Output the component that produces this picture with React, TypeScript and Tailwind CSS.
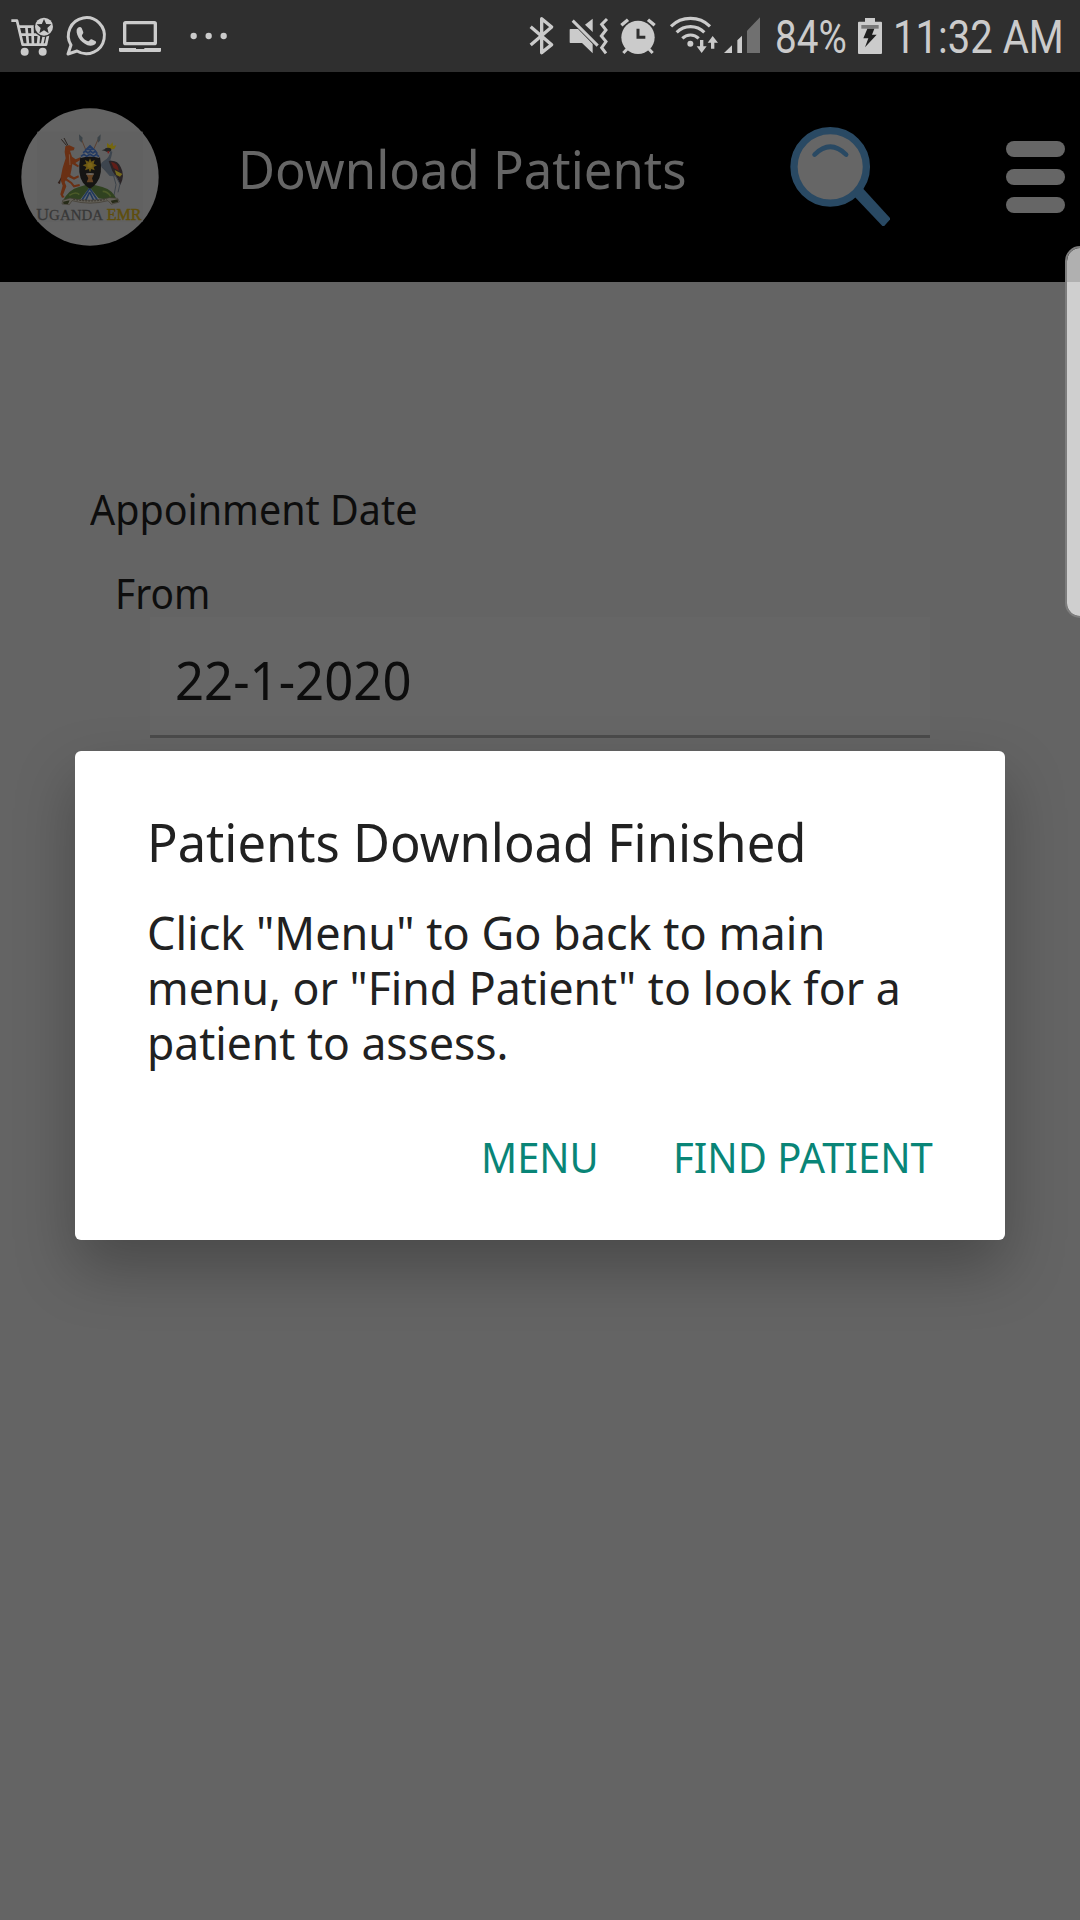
import React from "react";

const INK = "#cbcbcb";
const BAR = "#2f2f2f";

function CartIcon() {
  return (
    <svg viewBox="0 0 180 216" className="h-[72px] w-[60px] shrink-0" fill="none" stroke={INK}>
      <path d="M34 62H51L68 134H138L144 106" strokeWidth="8" strokeLinejoin="round" />
      <path d="M56 80H104M61 104H120M79 80L84 134M97 80L99 134M117 104L114 134M132 106L126 134" strokeWidth="8" />
      <circle cx="74" cy="155" r="12" fill={INK} stroke="none" />
      <circle cx="128" cy="155" r="12" fill={INK} stroke="none" />
      <circle cx="132" cy="80" r="31" fill={BAR} stroke="none" />
      <circle cx="132" cy="80" r="27" fill={INK} stroke="none" />
      <path d="M132 57L138.500 72L154 73L142 84L146 100L132 91L118 100L122 84L110 73L125.500 72Z" fill={BAR} stroke="none" />
    </svg>
  );
}

function WhatsAppIcon() {
  return (
    <svg viewBox="180 0 156 216" className="h-[72px] w-[52px] shrink-0" fill="none">
      <path d="M204 162L213 135A54 54 0 1 1 231 153Z" stroke={INK} strokeWidth="9" strokeLinejoin="round" />
      <path d="M230 89C232 82 241 77 245 84L250 97C251 101 244 105 246 109C250 117 257 122 264 124C268 125 270 117 275 118L287 124C292 130 281 138 271 137C248 135 227 108 230 89Z" fill={INK} />
    </svg>
  );
}

function LaptopIcon() {
  return (
    <svg viewBox="336 0 174 216" className="h-[72px] w-[58px] shrink-0" fill="none">
      <rect x="374" y="68" width="92" height="63" rx="3" stroke={INK} strokeWidth="10" />
      <path d="M357 144H408V147H433V144H483V152Q483 156 479 156H361Q357 156 357 152Z" fill={INK} />
    </svg>
  );
}

function MoreIcon() {
  return (
    <svg viewBox="510 0 270 216" className="h-[72px] w-[90px] shrink-0" fill={INK}>
      <circle cx="581" cy="108" r="9.500" />
      <circle cx="626" cy="108" r="9.500" />
      <circle cx="671" cy="108" r="9.500" />
    </svg>
  );
}

function BluetoothIcon() {
  return (
    <svg viewBox="0 0 150 216" className="h-[72px] w-[50px] shrink-0" fill="none" stroke={INK} strokeWidth="10">
      <path d="M62 80L125 134L95 158V56L125 81L62 135" strokeLinejoin="round" />
    </svg>
  );
}

function MuteVibrateIcon() {
  return (
    <svg viewBox="150 0 165 216" className="h-[72px] w-[55px] shrink-0" fill={INK}>
      <path d="M181 87H204L248 132V160L216 129H181Q179 129 179 127V89Q179 87 181 87Z" />
      <path d="M248 56V96L225 74Z" />
      <path d="M188 62L263 137" stroke={INK} strokeWidth="9" />
      <path d="M291 57L275 73L288 90L274 108L288 125L275 143L288 160" fill="none" stroke={INK} strokeWidth="9" />
    </svg>
  );
}

function AlarmIcon() {
  return (
    <svg viewBox="315 0 150 216" className="h-[72px] w-[50px] shrink-0" fill="none" stroke={INK}>
      <circle cx="384" cy="112" r="50" fill={INK} stroke="none" />
      <path d="M334 76L354 59M414 59L434 76" strokeWidth="10" />
      <path d="M352 146L340 159M416 146L428 159" strokeWidth="9" />
      <path d="M384 86V112H406" stroke={BAR} strokeWidth="9" />
    </svg>
  );
}

function WifiIcon() {
  return (
    <svg viewBox="465 0 168 216" className="h-[72px] w-[56px] shrink-0" fill="none" stroke={INK} strokeWidth="9.500">
      <path d="M483 79A84 84 0 0 1 600 79M500 97A59 59 0 0 1 583 97M517 115A35 35 0 0 1 566 115" />
      <circle cx="541" cy="131" r="9" fill={INK} stroke="none" />
      <path d="M575 120V146M608 146V120" strokeWidth="10" />
      <path d="M560 139L575 159L590 139ZM593 128L608 108L624 128Z" fill={INK} stroke="none" />
    </svg>
  );
}

function SignalIcon() {
  return (
    <svg viewBox="633 0 132 216" className="h-[72px] w-[44px] shrink-0" fill={INK}>
      <path d="M642 159L666 136V159Z" />
      <path d="M682 121L696 107V159H682Z" />
      <path d="M711 92L750 52V159H711Z" fill="#707070" />
    </svg>
  );
}

function BatteryIcon() {
  return (
    <svg viewBox="324 0 72 216" className="h-[72px] w-[24px] shrink-0">
      <path d="M345 54H375V65H393Q396 65 396 68V159Q396 162 393 162H327Q324 162 324 159V68Q324 65 327 65H345Z" fill={INK} />
      <rect x="334" y="75" width="52" height="11" fill="#797979" />
      <path d="M352 86H373L366 104H380L345 142L355 115H340Z" fill="#202020" />
    </svg>
  );
}

function StatusBar() {
  return (
    <div className="flex h-[72px] w-full overflow-hidden bg-[#2f2f2f] font-[Roboto,sans-serif] text-[45.500px] leading-[75px] text-[#cbcbcb]">
      <CartIcon />
      <WhatsAppIcon />
      <LaptopIcon />
      <MoreIcon />
      <div className="w-[250px] shrink-0" />
      <BluetoothIcon />
      <MuteVibrateIcon />
      <AlarmIcon />
      <WifiIcon />
      <SignalIcon />
      <div className="ml-[10px] w-[83px] shrink-0 origin-left scale-x-[0.850] whitespace-nowrap">84%</div>
      <BatteryIcon />
      <div className="ml-[11px] w-[180px] shrink-0 origin-left scale-x-[0.880] whitespace-nowrap">11:32 AM</div>
    </div>
  );
}

function Emblem() {
  return (
    <svg viewBox="0 0 480 480" className="ml-[10px] mt-[23px] h-[160px] w-[160px] shrink-0">
      <circle cx="240" cy="246" r="206" fill="#636363" />
      <rect x="82" y="110" width="316" height="270" fill="#616161" />
      {/* spears */}
      <path d="M211 125L244 205M268 125L232 205" stroke="#593f30" strokeWidth="3" />
      <path d="M207 118L218 128L215 143L208 136ZM272 118L262 128L264 143L271 136Z" fill="#3b4348" />
      {/* antelope */}
      <path d="M170 152L154 133M174 152L162 129" stroke="#2b2420" strokeWidth="3" fill="none" />
      <path d="M166 154L178 151L194 158L191 166L180 167L186 185L197 193L211 187L212 194L196 204L207 212L204 217L187 207L184 226L181 240L192 247L205 241L207 247L192 254L174 245L164 261L169 274L159 300L164 307L156 308L151 298L158 272L151 253L158 218L167 190L164 171Z" fill="#6a3014" />
      <path d="M173 170L177 190L170 225M164 250L184 264L192 274L209 270" stroke="#6a3014" strokeWidth="6" fill="none" />
      <path d="M154 247L143 264L150 267Z" fill="#32201a" />
      <path d="M178 178L180 210" stroke="#7a5540" strokeWidth="3" />
      {/* crane */}
      <path d="M291 157L291 144L300 151L308 142L309 153L319 151L313 162L301 163Z" fill="#75670f" />
      <ellipse cx="294" cy="164" rx="10" ry="6" fill="#252525" />
      <path d="M285 168L275 166L286 162Z" fill="#292929" />
      <path d="M295 168V175" stroke="#78201e" strokeWidth="5" />
      <path d="M301 167Q300 187 281 198Q268 207 275 216L299 243L315 244L319 213L301 195Q305 183 307 170Z" fill="#3d454e" />
      <path d="M296 198Q322 193 332 216Q346 241 331 270L323 252L307 228Z" fill="#292325" />
      <path d="M303 201Q324 203 327 228L311 219Z" fill="#601d17" />
      <path d="M314 225L337 237L330 245L319 240Z" fill="#75691b" />
      <path d="M310 239L318 269L312 301M315 240L330 267L324 292M275 216L294 230L310 238" stroke="#3d444b" strokeWidth="3" fill="none" />
      {/* mound */}
      <path d="M157 320Q176 283 207 276L239 266L277 276Q311 284 323 321L299 315Q240 302 183 318Z" fill="#304220" />
      <path d="M178 301Q198 288 208 299M278 289Q293 289 302 304" stroke="#4b5a28" strokeWidth="5" fill="none" />
      <path d="M239 277L207 319H273Z" fill="#66696d" />
      <path d="M239 280L216 315M239 280L262 315M239 291L227 316M239 291L251 316" stroke="#20395c" strokeWidth="5" />
      {/* shield */}
      <path d="M211 187Q240 178 270 187Q280 239 260 263Q251 276 240 281Q229 276 219 263Q201 239 211 187Z" fill="#151413" />
      <path d="M211 189Q217 175 227 166L240 153L254 166Q264 176 269 189Q240 181 211 189Z" fill="#66696d" />
      <path d="M229 163L240 153L251 163ZM219 173L227 168L234 174L241 168L249 174L256 168L262 176M213 184L222 178L230 184L240 178L251 184L259 178L267 185" stroke="#233a62" strokeWidth="5" fill="#233a62" fillOpacity="0.250" />
      <path d="M240 190L244 200L254 195L251 206L261 211L251 216L254 226L244 222L240 232L236 222L225 226L229 216L218 211L229 206L225 195L236 200Z" fill="#6c5814" />
      <circle cx="240" cy="211" r="8" fill="#7b6517" />
      <path d="M228 236H252L246 250L250 262H230L235 250Z" fill="#634223" />
      <ellipse cx="240" cy="237" rx="12" ry="3" fill="#6a635c" />
      {/* scroll */}
      <path d="M158 316L180 309Q240 323 299 308L323 310L328 321L304 328L294 317Q240 332 186 317L178 329L156 327Z" fill="#625f57" stroke="#403b32" strokeWidth="2" />
      <path d="M190 313Q240 323 290 313" stroke="#38342d" strokeWidth="3" strokeDasharray="5 4" fill="none" />
      <path d="M159 320L179 316L174 327H161ZM302 317L323 313L324 321L307 325Z" fill="#272b18" />
      <g fontFamily="Liberation Serif, serif" fontSize="51">
        <text x="79" y="375" fill="#383838" stroke="#383838" strokeWidth="0.800" textLength="200" lengthAdjust="spacingAndGlyphs">
          U<tspan fontSize="43">GANDA</tspan>
        </text>
        <text x="290" y="375" fill="#5f4e0c" stroke="#5f4e0c" strokeWidth="1.500" textLength="104" lengthAdjust="spacingAndGlyphs">EMR</text>
      </g>
    </svg>
  );
}

function SearchIcon() {
  return (
    <svg viewBox="0 0 310 310" className="h-[103px] w-[103px] shrink-0">
      <path d="M200 218L226 194L312 288L290 313Z" fill="#294963" />
      <circle cx="130" cy="132" r="109" fill="#666" stroke="#294963" strokeWidth="22" />
      <path d="M83 95Q130 48 178 95" fill="none" stroke="#294963" strokeWidth="14" strokeLinecap="round" />
    </svg>
  );
}

function Header() {
  return (
    <header className="flex h-[210px] w-full items-start bg-black">
      <Emblem />
      <h1 className="ml-[68px] mt-[67px] w-[480px] origin-left scale-x-[0.959] whitespace-nowrap text-[53px] leading-[60px] text-[#666]">
        Download Patients
      </h1>
      <div className="ml-[69px] mt-[51px]">
        <SearchIcon />
      </div>
      <div className="ml-[116px] mt-[69px] flex w-[59px] flex-col gap-[12px]">
        <div className="h-4 rounded-full bg-[#666]" />
        <div className="h-4 rounded-full bg-[#666]" />
        <div className="h-4 rounded-full bg-[#666]" />
      </div>
    </header>
  );
}

function Dialog() {
  return (
    <div className="absolute left-[75px] top-[751px] h-[489px] w-[930px] rounded-[6px] bg-white pl-[72px] pt-[61px] text-[#212121] shadow-[0_28px_60px_rgba(0,0,0,0.27)]">
      <h2 className="w-[700px] origin-left scale-x-[0.956] whitespace-nowrap text-[53px] leading-[60px]">Patients Download Finished</h2>
      <p className="mt-[33px] w-[800px] whitespace-nowrap text-[46.400px] leading-[55px]">
        <span className="block origin-left scale-x-[0.970]">Click "Menu" to Go back to main </span>
        <span className="block origin-left scale-x-[0.961]">menu, or "Find Patient" to look for a </span>
        <span className="block origin-left scale-x-[0.958]">patient to assess.</span>
      </p>
      <div className="mt-[63px] flex text-[41.500px] leading-[48px] text-[#098577]">
        <button className="ml-[334px] w-[124px] origin-left scale-x-[0.960] whitespace-nowrap text-left">MENU</button>
        <button className="ml-[68px] w-[280px] origin-left scale-x-[0.963] whitespace-nowrap text-left">FIND PATIENT</button>
      </div>
    </div>
  );
}

export default function App() {
  return (
    <div className="relative h-[1920px] w-[1080px] overflow-hidden bg-[#646464] font-['Noto_Sans',sans-serif]">
      <StatusBar />
      <Header />
      <main className="pt-[203px] text-[#0d0d0d]">
        <div className="ml-[90px] w-[400px] origin-left scale-x-[0.950] text-[41.500px] leading-[48px]">Appoinment Date</div>
        <div className="ml-[115px] mt-[36px] w-[200px] origin-left scale-x-[0.937] text-[41.500px] leading-[48px]">From</div>
        <div className="ml-[150px] h-[121px] w-[780px] border-b-[3px] border-[#4b4b4b] bg-[#666] pl-[25px] pt-[33px]">
          <div className="w-[300px] origin-left scale-x-[0.960] text-[53px] leading-[60px]">22-1-2020</div>
        </div>
      </main>
      <Dialog />
      <div className="absolute left-[1065px] top-[246px] h-[372px] w-[30px] rounded-[18px] border-2 border-[#7d7d7d] bg-white/[0.69] bg-clip-padding" />
    </div>
  );
}
